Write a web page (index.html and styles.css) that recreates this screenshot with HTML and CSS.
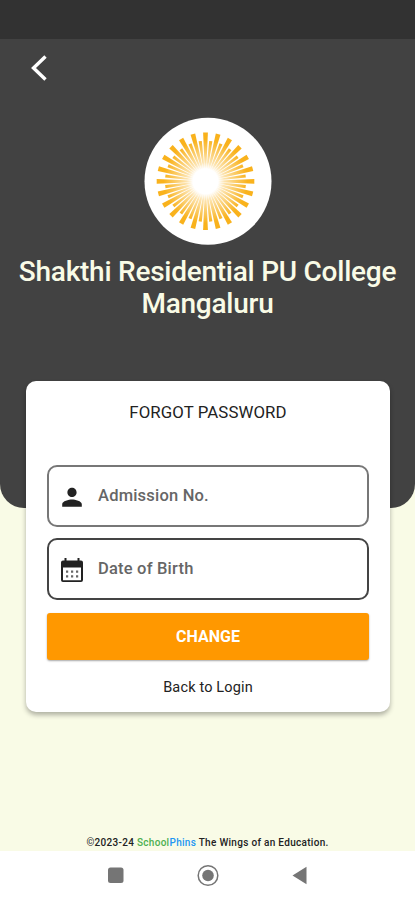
FILE: index.html
```html
<!DOCTYPE html>
<html lang="en">
<head>
<meta charset="utf-8">
<title>Forgot Password</title>
<link rel="stylesheet" href="styles.css">
</head>
<body>
<div class="statusbar"></div>
<header class="hero">
  <svg class="back" viewBox="0 0 20 30"><path d="M16.500 4.500 4.500 16 16.500 27.500" fill="none" stroke="#fff" stroke-width="3.400"/></svg>
  <svg class="logo" viewBox="-66 -64 128 128">
    <defs>
      <radialGradient id="glow" gradientUnits="userSpaceOnUse" cx="0" cy="0" r="42">
        <stop offset="0.3" stop-color="#fff"/>
        <stop offset="0.45" stop-color="#fff" stop-opacity="0.65"/>
        <stop offset="1" stop-color="#fff" stop-opacity="0"/>
      </radialGradient>
      <g id="pair">
        <path d="M-.6-8-2.400-48.800H2.400L.6-8Z"/>
        <path d="M-.5-8-1.600-40.500H1.600L.5-8Z" transform="rotate(7.5)"/>
      </g>
      <g id="eighth"><use href="#pair"/><use href="#pair" transform="rotate(15)"/><use href="#pair" transform="rotate(30)"/></g>
      <g id="quarter"><use href="#eighth"/><use href="#eighth" transform="rotate(45)"/></g>
    </defs>
    <circle cx="-2" cy=".3" r="63.500" fill="#fff"/>
    <g fill="#f9b21c" transform="translate(-4.500 .3)">
      <use href="#quarter"/><use href="#quarter" transform="rotate(90)"/><use href="#quarter" transform="rotate(180)"/><use href="#quarter" transform="rotate(270)"/>
      <circle r="42" fill="url(#glow)"/>
    </g>
  </svg>
  <h1>Shakthi Residential PU College<br>Mangaluru</h1>
</header>
<main class="card">
  <h2>FORGOT PASSWORD</h2>
  <div class="field">
    <svg class="icon" viewBox="0 0 24 24"><path d="M12 12c2.500 0 4.600-2 4.600-4.600S14.500 2.800 12 2.800 7.400 4.800 7.400 7.400 9.500 12 12 12Zm0 2.500c-3.200 0-9.800 1.600-9.800 4.700v2.600h19.600v-2.600c0-3.100-6.600-4.700-9.800-4.700Z"/></svg>
    <span>Admission No.</span>
  </div>
  <div class="field field-date">
    <svg class="icon" viewBox="0 0 24 24"><path fill-rule="evenodd" d="M3 2.500H4.500V0H6.500V2.500H17.500V0H19.500V2.500H21Q23 2.500 23 4.500V22Q23 24 21 24H3Q1 24 1 22V4.500Q1 2.500 3 2.500ZM3 9.500V22.300H21V9.500Z"/><path d="M6 12.500h2.200v2.200H6zm5 0h2.200v2.200H11zm5 0h2.200v2.200H16zM6 17.300h2.200v2.200H6zm5 0h2.200v2.200H11zm5 0h2.200v2.200H16z" fill="#666"/></svg>
    <span>Date of Birth</span>
  </div>
  <div class="button">CHANGE</div>
  <div class="login">Back to Login</div>
</main>
<footer>©2023-24 <span class="green">School</span><span class="blue">Phins</span> The Wings of an Education.</footer>
<nav>
  <svg viewBox="0 0 24 24"><rect x="4" y="4.500" width="15.500" height="15.500" rx="2.500"/></svg>
  <svg viewBox="0 0 24 24"><circle cx="12" cy="12.500" r="9.800" fill="none" stroke="#757575" stroke-width="1.500"/><circle cx="12" cy="12.500" r="5.800"/></svg>
  <svg viewBox="0 0 24 24"><path d="M4.500 12.500 18.500 3.800V21.200Z"/></svg>
</nav>
</body>
</html>
```
FILE: styles.css
```css
* { box-sizing: border-box; }
body {
  margin: 0;
  height: 900px;
  display: flex;
  flex-direction: column;
  background: #f9fbe6;
  font-family: Roboto, sans-serif;
  overflow: hidden;
}
svg { display: block; }
.statusbar { height: 39px; flex: none; background: #323232; }
.hero {
  height: 469px;
  flex: none;
  display: flex;
  flex-direction: column;
  align-items: center;
  background: #424242;
  border-radius: 0 0 24px 24px;
}
.back { width: 20px; height: 30px; margin: 13px 0 0 29px; align-self: flex-start; }
.logo { width: 128px; height: 128px; margin: 35px 0 0; }
h1 {
  margin: 11px 0 0;
  font-size: 28px;
  line-height: 31.500px;
  font-weight: 500;
  letter-spacing: -.25px;
  color: #f9fbe6;
  text-align: center;
  white-space: nowrap;
}
.card {
  width: 364px;
  height: 331px;
  flex: none;
  margin: -127px 0 0 26px;
  padding: 0 21px;
  background: #fff;
  border-radius: 10px;
  box-shadow: 0 3px 5px rgba(0, 0, 0, .3);
}
h2 {
  margin: 22px 0 43px;
  font-size: 16.800px;
  line-height: 19px;
  font-weight: 400;
  letter-spacing: .1px;
  color: #222;
  text-align: center;
}
.field {
  height: 62px;
  display: flex;
  align-items: center;
  gap: 14px;
  padding: 0 0 1px 11px;
  margin-bottom: 11px;
  border: 2px solid #777;
  border-radius: 10px;
  font-size: 16.500px;
  line-height: 20px;
  font-weight: 500;
  letter-spacing: .2px;
  color: #666;
}
.field-date { border-color: #444; margin-bottom: 13px; }
.icon { width: 24px; height: 24px; margin-top: 2px; fill: #222; }
.button {
  height: 47px;
  line-height: 47px;
  border-radius: 3px;
  background: #ff9800;
  box-shadow: 0 1px 2px rgba(0, 0, 0, .35);
  color: #fff;
  font-size: 16px;
  font-weight: 700;
  text-align: center;
}
.login { margin-top: 19px; font-size: 14.500px; line-height: 18px; letter-spacing: .15px; text-align: center; color: #222; }
footer {
  margin-top: auto;
  height: 16px;
  flex: none;
  font-size: 10px;
  line-height: 15px;
  font-weight: 500;
  letter-spacing: .3px;
  text-align: center;
  color: #222;
}
.green { color: #4caf50; }
.blue { color: #2196f3; }
nav {
  height: 49px;
  flex: none;
  display: flex;
  justify-content: center;
  gap: 68px;
  padding-top: 12px;
  background: #fff;
}
nav svg { width: 24px; height: 24px; fill: #757575; }
```
